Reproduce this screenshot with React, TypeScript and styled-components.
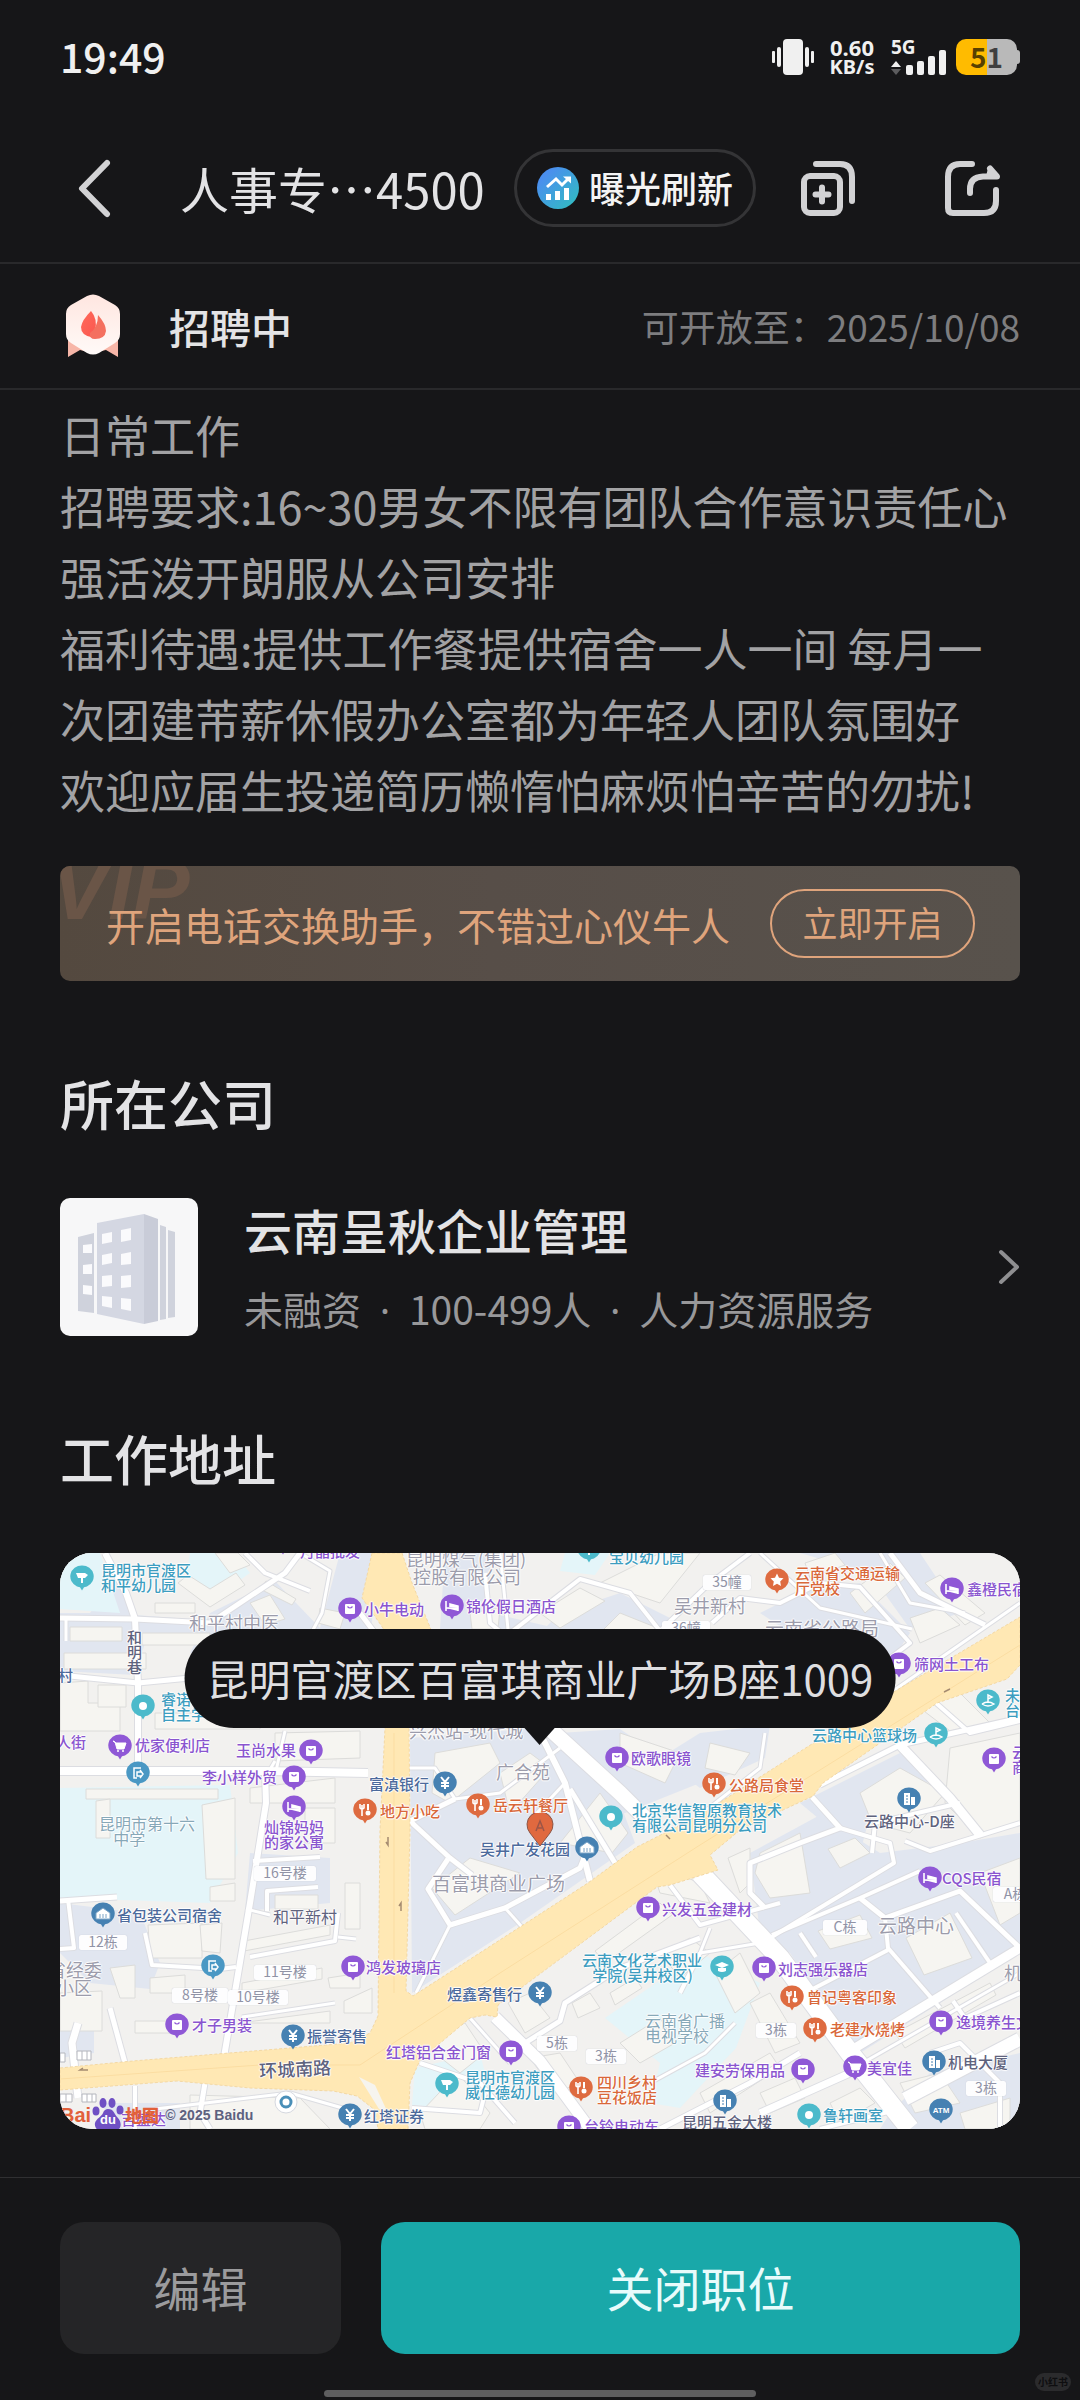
import React from "react";
import styled, { createGlobalStyle } from "styled-components";

const GlobalStyle = createGlobalStyle`
  * { box-sizing: border-box; }
  html, body { margin: 0; background: #161618; }
  body, button { font-family: "Noto Sans CJK SC", "Noto Sans", sans-serif; }
`;

const Page = styled.div`
  min-height: 100vh;
  display: flex;
  flex-direction: column;
  background: #161618;
  color: #e3e3e5;
`;

/* ---------- status bar ---------- */

const StatusBar = styled.div`
  height: 114px;
  padding: 0 60px;
  display: flex;
  align-items: center;
  color: #f0f0f0;
`;
const Clock = styled.time`
  flex: 1;
  padding-bottom: 4px;
  font-size: 41px;
  line-height: 48px;
  font-weight: 500;
`;
const StatusIcons = styled.div`
  display: flex;
  align-items: center;
`;
const Speed = styled.div`
  width: 76px;
  text-align: center;
  font-family: "Noto Sans", sans-serif;
  font-weight: 700;
  font-size: 20px;
  line-height: 20px;
`;
const SpeedValue = styled.div`
  font-size: 22px;
`;
const SignalIcon = styled.svg`
  margin-right: 8px;
`;
const Battery = styled.div`
  display: flex;
  align-items: center;
`;
const BatteryBody = styled.div`
  width: 61px;
  height: 36px;
  border-radius: 10px;
  background: linear-gradient(90deg, #ffbb00 51%, #b9b9b9 51%);
  color: rgba(0, 0, 0, 0.66);
  font-size: 28px;
  line-height: 34px;
  font-weight: 700;
  text-align: center;
`;
const BatteryTip = styled.div`
  width: 3px;
  height: 14px;
  border-radius: 0 3px 3px 0;
  background: #b9b9b9;
`;

/* ---------- header ---------- */

const Header = styled.header`
  height: 150px;
  padding: 0 78px 0 60px;
  display: flex;
  align-items: center;
  border-bottom: 2px solid #29292b;
`;
const IconButton = styled.button<{ $gap?: number }>`
  width: 60px;
  height: 60px;
  margin: 0 0 0 ${(p) => p.$gap ?? 0}px;
  padding: 0;
  border: 0;
  background: none;
  color: #d2d2d4;
  flex: none;
  svg { display: block; }
`;
const Title = styled.h1`
  flex: 1;
  min-width: 0;
  margin: 0 0 0 60px;
  font-size: 49px;
  line-height: 64px;
  font-weight: 400;
  white-space: nowrap;
`;
const BoostButton = styled.button`
  height: 78px;
  padding: 0 20px;
  display: flex;
  align-items: center;
  gap: 10px;
  flex: none;
  border: 3px solid #343436;
  border-radius: 39px;
  background: none;
  color: #f4f4f4;
  font-size: 36px;
  line-height: 48px;
  font-weight: 500;
`;
const BoostLabel = styled.span`
  padding-bottom: 3px;
`;

/* ---------- recruiting state ---------- */

const StateRow = styled.section`
  height: 126px;
  padding: 0 60px;
  display: flex;
  align-items: center;
  border-bottom: 2px solid #29292b;
`;
const StateName = styled.strong`
  flex: 1;
  margin-left: 45px;
  font-size: 41px;
  line-height: 56px;
  font-weight: 500;
`;
const OpenUntil = styled.span`
  color: #7d7d7f;
  font-size: 37px;
  line-height: 48px;
`;

/* ---------- body ---------- */

const Main = styled.main`
  flex: 1;
  padding: 9px 60px 48px;
`;
const Description = styled.p`
  margin: 0;
  color: #a2a2a4;
  font-size: 45px;
  line-height: 71px;
  white-space: pre-line;
`;
const Banner = styled.aside`
  position: relative;
  overflow: hidden;
  height: 115px;
  margin-top: 41px;
  padding: 0 45px 0 46px;
  display: flex;
  align-items: center;
  justify-content: space-between;
  border-radius: 10px;
  background: linear-gradient(90deg, #54493f 0%, #574e48 45%, #58524c 100%);
  color: #dfa47c;
`;
const VipMark = styled.span`
  position: absolute;
  left: -9px;
  top: -17px;
  color: #6a5547;
  font-family: "Liberation Sans", sans-serif;
  font-size: 86px;
  line-height: 80px;
  font-weight: 700;
  font-style: italic;
`;
const BannerText = styled.span`
  position: relative;
  font-size: 39px;
  line-height: 56px;
  white-space: nowrap;
`;
const BannerButton = styled.button`
  width: 205px;
  height: 69px;
  padding: 0 0 3px;
  border: 2px solid #dfa47c;
  border-radius: 35px;
  background: none;
  color: #dfa47c;
  font-size: 35px;
  line-height: 48px;
`;
const SectionTitle = styled.h2`
  margin: 90px 0 63px;
  font-size: 54px;
  line-height: 64px;
  font-weight: 500;
`;
const Company = styled.a`
  display: flex;
  align-items: center;
  color: inherit;
  text-decoration: none;
  svg { flex: none; display: block; }
`;
const CompanyText = styled.div`
  flex: 1;
  margin-left: 46px;
`;
const CompanyName = styled.div`
  font-size: 48px;
  line-height: 62px;
  font-weight: 500;
`;
const CompanyMeta = styled.div`
  margin-top: 20px;
  color: #98989a;
  font-size: 39px;
  line-height: 56px;
`;
const Dot = styled.span`
  margin: 0 10px;
  font-family: "Noto Sans", sans-serif;
  line-height: 1;
`;

/* ---------- map ---------- */

const MapBox = styled.div`
  position: relative;
  height: 576px;
  overflow: hidden;
  border-radius: 32px;
  background: #f2f1ef;
`;
const MapArt = styled.svg`
  display: block;
  width: 100%;
  height: 100%;
`;
const tones = {
  purple: "#8a55cf",
  teal: "#3d9dc0",
  orange: "#d9683a",
  blue: "#4c6a9c",
  ink: "#5f637e",
  grey: "#9c9cab",
  mist: "#87a8b8",
} as const;
type Tone = keyof typeof tones;

const MapLabel = styled.span<{ $x: number; $y: number; $tone: Tone; $size: number }>`
  position: absolute;
  left: ${(p) => p.$x}px;
  top: ${(p) => p.$y - 10}px;
  color: ${(p) => tones[p.$tone]};
  font-size: ${(p) => p.$size}px;
  line-height: 15px;
  font-weight: ${(p) => (p.$size > 15 ? 400 : 500)};
  white-space: pre;
  text-shadow: 0 0 1px #fff, 1px 0 1px #fff, -1px 0 1px #fff, 0 1px 1px #fff, 0 -1px 1px #fff;
`;
const RoadName = styled(MapLabel)`
  transform: rotate(-3deg);
  font-weight: 500;
`;
const MapTag = styled.span<{ $x: number; $y: number; $w: number }>`
  position: absolute;
  left: ${(p) => p.$x - p.$w / 2}px;
  top: ${(p) => p.$y - 8}px;
  width: ${(p) => p.$w}px;
  height: 15px;
  border-radius: 2px;
  background: #fdfdfe;
  box-shadow: 0 0 1px #b9bccb;
  color: #9093a6;
  font-size: 14px;
  line-height: 13px;
  text-align: center;
  white-space: nowrap;
`;
const PinSvg = styled.svg<{ $x: number; $y: number }>`
  position: absolute;
  left: ${(p) => p.$x - 13}px;
  top: ${(p) => p.$y - 12}px;
`;
const Bubble = styled.div`
  position: absolute;
  left: 50%;
  top: 76px;
  height: 99px;
  padding: 0 22px;
  transform: translateX(-50%);
  border-radius: 50px;
  background: #141416;
  color: #dedee0;
  font-size: 42px;
  line-height: 97px;
  white-space: nowrap;
  &::after {
    content: "";
    position: absolute;
    left: 50%;
    top: 98px;
    margin-left: -16px;
    border: 16px solid transparent;
    border-top: 18px solid #141416;
    border-bottom: 0;
  }
`;
const BaiduMark = styled.div`
  position: absolute;
  left: 0;
  bottom: 0;
  height: 28px;
  display: flex;
  align-items: center;
  color: #e2603a;
  font-size: 17px;
  line-height: 20px;
  font-weight: 900;
`;
const BaiduName = styled.span`
  font-family: "Liberation Sans", sans-serif;
  font-size: 20px;
`;
const Copyright = styled.span`
  margin-left: 6px;
  color: #5d6180;
  font-family: "Liberation Sans", sans-serif;
  font-size: 14px;
  font-weight: 700;
`;

/* ---------- footer ---------- */

const Footer = styled.footer`
  position: relative;
  padding: 44px 60px 3px;
  border-top: 1px solid #303032;
`;
const Actions = styled.div`
  display: flex;
  gap: 40px;
`;
const ActionButton = styled.button<{ $primary?: boolean }>`
  flex: ${(p) => (p.$primary ? "1 1 0" : "0 0 281px")};
  height: 132px;
  padding: 0 0 2px;
  border: 0;
  border-radius: 24px;
  background: ${(p) => (p.$primary ? "#19a8a9" : "#252527")};
  color: ${(p) => (p.$primary ? "#e8fbfb" : "#9b9b9d")};
  font-size: 47px;
  line-height: 64px;
`;
const HomeIndicator = styled.div`
  width: 45%;
  height: 7px;
  margin: 36px auto 0;
  border-radius: 4px;
  background: #5e5e5f;
`;
const Watermark = styled.span`
  position: absolute;
  right: 9px;
  bottom: 9px;
  width: 36px;
  height: 18px;
  border-radius: 9px;
  background: #2b2b2d;
  color: #0e0e10;
  font-size: 10px;
  line-height: 18px;
  font-weight: 700;
  text-align: center;
`;

/* ---------- map data ---------- */

type Glyph = "bag" | "bed" | "cart" | "food" | "yen" | "build" | "dot" | "tree" | "ball" | "exit" | "hall" | "cap" | "star" | "atm";
type PinTone = "purple" | "teal" | "orange" | "blue" | "sky";

const pinFill: Record<PinTone, string> = {
  purple: "#8f58d6",
  teal: "#4cbacb",
  orange: "#de6b40",
  blue: "#4681b2",
  sky: "#4a98c4",
};

const pins: [number, number, PinTone, Glyph][] = [
  [22, 24, "teal", "tree"], [83, 153, "teal", "dot"], [60, 193, "purple", "cart"], [78, 220, "sky", "exit"],
  [251, 198, "purple", "bag"], [234, 224, "purple", "bag"], [234, 254, "purple", "bed"], [290, 56, "purple", "bag"],
  [223, -12, "purple", "bag"], [529, -4, "teal", "tree"], [392, 53, "purple", "bed"], [557, 205, "purple", "bag"],
  [385, 230, "blue", "yen"], [305, 257, "orange", "food"], [418, 252, "orange", "food"], [551, 264, "teal", "dot"],
  [717, 27, "orange", "star"], [892, 36, "purple", "bed"], [839, 111, "purple", "bag"], [928, 148, "teal", "ball"],
  [876, 181, "teal", "ball"], [934, 206, "purple", "bag"], [654, 231, "orange", "food"], [849, 246, "blue", "build"],
  [43, 361, "blue", "hall"], [153, 413, "sky", "exit"], [293, 414, "purple", "bag"], [117, 472, "purple", "bag"],
  [233, 483, "blue", "yen"], [290, 562, "blue", "yen"], [527, 295, "blue", "hall"], [588, 355, "purple", "bag"],
  [662, 414, "teal", "cap"], [480, 440, "blue", "yen"], [451, 499, "purple", "bag"], [387, 531, "teal", "tree"],
  [521, 535, "orange", "food"], [509, 574, "purple", "bag"], [665, 548, "blue", "build"], [870, 325, "purple", "bed"],
  [704, 415, "purple", "bag"], [732, 444, "orange", "food"], [755, 476, "orange", "food"], [881, 469, "purple", "bag"],
  [743, 517, "purple", "bag"], [795, 514, "purple", "cart"], [874, 509, "blue", "build"], [881, 557, "blue", "atm"],
  [749, 562, "teal", "dot"],
];

const labels: [string, number, number, Tone, number?][] = [
  ["昆明市官渡区\n和平幼儿园", 41, 19, "teal"],
  ["和平村中医", 129, 72, "grey", 18],
  ["和\n明\n巷", 67, 86, "ink"],
  ["村", -2, 124, "blue"],
  ["睿诺\n自主学", 101, 148, "teal"],
  ["人街", -4, 191, "purple"],
  ["优家便利店", 75, 194, "purple"],
  ["玉尚水果", 176, 199, "purple"],
  ["李小样外贸", 142, 226, "purple"],
  ["灿锦妈妈\n的家公寓", 204, 276, "purple"],
  ["昆明市第十六\n    中学", 39, 273, "mist", 16],
  ["丹晶批发", 240, 0, "purple"],
  ["小牛电动", 304, 58, "purple"],
  ["昆明煤气(集团)", 346, 8, "grey", 18],
  ["控股有限公司", 353, 26, "grey", 18],
  ["宝贝幼儿园", 549, 6, "teal"],
  ["锦伦假日酒店", 406, 55, "purple"],
  ["吴井新村", 614, 55, "grey", 18],
  ["兴杰站-现代城", 349, 180, "grey", 18],
  ["广合苑", 436, 221, "grey", 18],
  ["欧歌眼镜", 571, 207, "purple"],
  ["富滇银行", 309, 233, "blue"],
  ["地方小吃", 320, 260, "orange"],
  ["岳云轩餐厅", 433, 254, "orange"],
  ["北京华信智原教育技术\n有限公司昆明分公司", 572, 259, "teal"],
  ["云南省交通运输\n厅党校", 735, 22, "orange"],
  ["鑫橙民宿", 907, 38, "purple"],
  ["云南省公路局", 705, 77, "grey", 19],
  ["筛网土工布", 854, 113, "purple"],
  ["未\n台", 945, 144, "teal"],
  ["云路中心篮球场", 752, 184, "teal"],
  ["云\n商", 952, 201, "purple"],
  ["公路局食堂", 669, 234, "orange"],
  ["云路中心-D座", 804, 270, "ink"],
  ["和平新村", 213, 366, "ink", 16],
  ["省包装公司宿舍", 57, 364, "blue"],
  ["省经委", -12, 419, "grey", 18],
  ["小区", -4, 437, "grey", 18],
  ["鸿发玻璃店", 306, 416, "purple"],
  ["才子男装", 132, 474, "purple"],
  ["振誉寄售", 247, 485, "blue"],
  ["吉盛达", 61, 568, "purple"],
  ["红塔证券", 304, 565, "blue"],
  ["吴井广发花园", 420, 298, "blue"],
  ["百富琪商业广场", 372, 332, "grey", 19],
  ["兴发五金建材", 602, 358, "purple"],
  ["云南文化艺术职业\n   学院(吴井校区)", 522, 409, "teal"],
  ["煜鑫寄售行", 387, 443, "blue"],
  ["云南省广播\n电视学校", 585, 470, "mist", 16],
  ["红塔铝合金门窗", 326, 501, "purple"],
  ["昆明市官渡区\n威仕德幼儿园", 405, 526, "teal"],
  ["四川乡村\n豆花饭店", 537, 531, "orange"],
  ["台铃电动车", 524, 575, "purple"],
  ["昆明五金大楼", 622, 571, "ink"],
  ["CQS民宿", 882, 327, "purple"],
  ["云路中心", 818, 374, "grey", 19],
  ["机", 944, 422, "grey", 18],
  ["刘志强乐器店", 718, 418, "purple"],
  ["曾记粤客印象", 747, 446, "orange"],
  ["老建水烧烤", 770, 478, "orange"],
  ["逸境养生文化", 896, 471, "purple"],
  ["建安劳保用品", 635, 519, "purple"],
  ["美宜佳", 807, 517, "purple"],
  ["机电大厦", 888, 511, "ink"],
  ["鲁轩画室", 763, 564, "teal"],
];

const tags: [string, number, number, number][] = [
  ["35幢", 667, 30, 48], ["36幢", 626, 76, 48], ["16号楼", 225, 321, 62], ["12栋", 43, 390, 48],
  ["11号楼", 225, 420, 62], ["8号楼", 140, 443, 56], ["10号楼", 198, 445, 60], ["5栋", 497, 491, 40],
  ["3栋", 546, 504, 40], ["C栋", 785, 375, 44], ["A栋", 955, 342, 44], ["3栋", 716, 478, 40], ["3栋", 926, 536, 40],
];

const greyZones = [
  "M0 60H30L60 20L75 62L130 66L160 90H85L75 122L0 118Z",
  "M150 60L215 28L260 75L280 0H315L312 70L300 100H130Z",
  "M385 0H430V60L500 76H380Z",
  "M500 60L560 40L640 80H480Z",
  "M700 60L740 40L800 30L850 80L830 110L760 100Z",
  "M740 0H860L900 60L850 76L810 20Z",
  "M350 185L420 180L470 175L560 250L575 290L460 370L352 440Z",
  "M500 180L560 176L640 230L560 262L480 192Z",
  "M640 180L710 172L705 205L640 235L600 205Z",
  "M770 235L840 200L870 228L810 262L800 300L740 250Z",
  "M690 300L760 262L820 300L900 290L960 280V380L880 450L780 475L730 400L700 380Z",
  "M780 470L860 420L960 360V400L800 500Z",
  "M0 350L80 360L100 410L90 436L30 430L0 400Z",
  "M190 300L270 305V350L185 358Z",
  "M0 455H34V500L0 505Z",
  "M830 560L870 520L960 500V576H820Z",
  "M40 550H120V576H60Z",
  "M660 80L700 110L640 150L560 90Z",
];
const cyanZones = [
  "M0 0H40L60 60L0 56Z",
  "M130 0H175L190 20L150 48L125 30Z",
  "M0 235L170 232L178 300L150 350L0 345Z",
  "M505 0H550L535 22L500 18Z",
  "M545 465L640 400L700 430L676 495L620 555L590 550L600 510Z",
  "M355 515L420 500L430 540L400 556L352 552Z",
];
const buildings = [
  "M10 74H62V88H10Z", "M82 80H150V92H82Z", "M4 100H86V116H4Z", "M0 130L28 128V150H60V178H0Z",
  "M38 132H66V154H38Z", "M95 50H135V60H95Z", "M118 30L150 54L185 32L176 20L150 36L128 22Z",
  "M155 0H178L190 12L170 20Z", "M190 50L210 42L225 66L205 72Z", "M206 28L236 46L232 52L200 36Z",
  "M260 55L285 60L280 76L258 70Z", "M95 160H200V176H95Z", "M215 180L300 178L300 205L215 208Z",
  "M26 236H158V246H26Z", "M36 248L50 246V285H36Z", "M142 252L175 245V326H146Z", "M150 334L175 330V348H150Z",
  "M190 235L275 225V250H190Z", "M245 255H275V290H245Z", "M215 342H258V356H215Z", "M285 330H300V376H285Z",
  "M88 372L142 370V405H90Z", "M140 372L162 370L160 400L142 398Z", "M184 388L270 372V382L184 398Z",
  "M0 440L42 438V478H0Z", "M50 415L75 412V445H60Z", "M75 468H120V480H75Z", "M90 425L125 422V440H90Z",
  "M182 430L262 415V426L182 440Z", "M268 425L300 420V435H270Z", "M284 448L312 435V460H284Z",
  "M180 470L270 458V470H180Z", "M130 542L240 545L270 576H130Z", "M375 200L430 190L440 210L390 250L372 240Z",
  "M440 220L470 200L490 215L450 260Z", "M500 290L540 240L568 280L552 300Z", "M372 335L410 305L460 320L395 362Z",
  "M480 60L520 35L545 48L500 75Z", "M410 60L440 55L438 76H412Z", "M520 100L560 60L600 76Z",
  "M540 30L600 0L640 0L600 50Z", "M560 180L620 200L605 230L560 210Z", "M650 190L690 200L675 222L645 215Z",
  "M745 10L775 0L785 12L750 25Z", "M790 40L830 10L845 25L805 60Z", "M865 30L880 22L925 60L905 72Z",
  "M850 65L880 55L900 72L860 90Z", "M860 155L900 140L930 170L890 178Z", "M890 195L960 180V270L920 285L885 250Z",
  "M800 240L840 215L885 240L850 280L812 270Z", "M768 296L795 285L810 300L780 315Z",
  "M700 300L740 280L750 340L710 345L695 320Z", "M758 378L800 362L812 385L770 396Z",
  "M846 385L890 360L912 405L864 422Z", "M920 320L960 305V360L940 372Z", "M535 398L600 350L612 362L545 410Z",
  "M600 400L630 385L650 400L620 425Z", "M448 450L470 440L490 465L465 480Z", "M512 450L530 440L540 455L518 465Z",
  "M550 440L575 425L582 435L555 452Z", "M560 490L600 465L615 490L580 510Z", "M470 505L500 500L520 530L495 540Z",
  "M362 490L405 470L425 500L400 520Z", "M640 540L710 500L720 515L650 560Z", "M655 420L680 400L700 440L675 460Z",
  "M690 450L710 440L740 490L715 500Z", "M700 540L735 525L745 545L710 560Z", "M770 550L800 535L815 550L780 570Z",
  "M840 530L880 520L900 550L855 560Z", "M900 560L950 545V576H905Z", "M835 480L930 430L936 442L845 495Z",
  "M590 310L640 330L650 350L600 340Z", "M668 305L690 295L690 330L680 340Z", "M398 520L430 560L420 576H365L360 560Z",
];
const roads: [string, number][] = [
  ["M45 0L66 40L75 66L78 130V215", 7], ["M0 65L75 66L150 70L225 20L240 0", 6], ["M0 122L78 130L140 124", 6],
  ["M0 218H205L308 220", 9], ["M205 218L206 250L190 350L163 510", 7], ["M240 0L270 18L262 60L230 120", 4],
  ["M185 0L205 20L250 38", 5], ["M300 60L318 84", 6], ["M225 178L216 218", 4], ["M6 66V88", 4],
  ["M0 348L57 344", 6], ["M8 346L14 395L0 396", 5], ["M85 380L92 412L160 416L176 414", 5],
  ["M50 455L65 510", 6], ["M18 470L12 490L18 545", 8], ["M193 308L260 304", 5], ["M207 358V338L258 334", 5],
  ["M186 356L210 362", 4], ["M190 404L275 388L278 360", 5], ["M278 384L296 386", 4], ["M182 464L275 450", 4],
  ["M145 530L140 560L150 576", 6], ["M75 533V576", 5], ["M95 556L230 540L300 560", 4], ["M215 208L205 225", 4],
  ["M350 215H375L395 246L440 240L500 195", 4], ["M395 246L350 268L390 305L412 322", 6],
  ["M388 306L368 336L390 372L445 355L520 315L530 290", 6], ["M390 372L356 440", 4], ["M445 355L462 374", 4],
  ["M480 180L505 230L530 328", 7], ["M505 230L475 262", 4], ["M490 176L560 240L590 270", 16],
  ["M510 236L555 310", 6], ["M425 20L430 70L442 80", 5], ["M450 80L520 26L570 40L600 78L650 30L690 0", 5],
  ["M440 0L448 76", 4], ["M652 70L680 45L720 50L760 30L800 34L850 90L830 105L780 100", 5],
  ["M700 0L760 55L852 76", 4], ["M830 0L860 40L925 72", 6], ["M820 0L850 50L905 60", 4],
  ["M730 220L830 140L960 50", 4], ["M760 232L840 192L960 165", 6], ["M838 190L890 245L920 282", 10],
  ["M876 150L910 180L960 168", 5], ["M900 250L815 270L812 300", 5], ["M640 262L700 215L705 180", 4],
  ["M752 244L780 275L740 290L690 310L690 340L705 355", 6], ["M780 275L830 290L834 310L710 385", 5],
  ["M712 382L800 345L860 318", 5], ["M800 345L825 365L900 338L960 395", 6], ["M825 365L828 395L880 455", 5],
  ["M828 397L745 440", 5], ["M740 380L756 404", 5], ["M896 360L930 410", 5], ["M845 288L870 298L960 270", 5],
  ["M640 320L720 405L790 500L850 576", 20], ["M790 498L960 395", 10], ["M806 508L960 420", 4],
  ["M700 560L790 520", 8], ["M845 546L960 486", 14], ["M893 448L905 465L960 440", 5],
  ["M610 332L640 372L720 350", 5], ["M650 375L640 400L700 390", 4], ["M435 464L480 508L530 576", 12],
  ["M465 490L500 468L505 450L560 415L640 385", 6], ["M620 440L640 400", 5], ["M360 510L420 530L455 570", 5],
  ["M352 555L420 560L425 540", 5], ["M590 530L645 500L675 470", 4], ["M600 576L690 530L740 500", 6],
  ["M410 465L450 510", 4], ["M870 500L900 490L940 530V576", 5], ["M760 576L840 556", 5],
];
const avenue =
  "M312 0H342L352 30L374 84L349 175L350 277L346 438L353 443L460 374L528 330L577 294L640 262L763 184L837 137L960 64V112L947 126L877 150L763 230L753 243L680 277L650 302L658 317L610 332L597 334L438 452L437 464L425 462L410 465L360 507L350 530L348 576H318L315 557L297 543L273 538L190 535L117 528L0 537V515L73 508L290 490L310 480L318 463L320 277L325 175L323 75L302 45Z";

const glyphs: Record<Glyph, React.ReactNode> = {
  bag: (<><rect x="8" y="7" width="10" height="10" rx="1" fill="#fff" /><path d="M10.500 9.500q2.500 3 5 0" fill="none" stroke="#8f58d6" strokeWidth="1.200" /></>),
  bed: (<path d="M7 7v10M7 14h12v3M19 14v-2l-8-2v3" fill="#fff" stroke="#fff" strokeWidth="1.600" />),
  cart: (<><path d="M6 7l2 1 2 7h7l2-6H9z" fill="#fff" stroke="#fff" /><circle cx="11" cy="17" r="1" fill="#fff" /><circle cx="16" cy="17" r="1" fill="#fff" /></>),
  food: (<><path d="M8 6v4q2 2 4 0V6M10 7v11" fill="none" stroke="#fff" strokeWidth="1.600" /><path d="M16 6v6" stroke="#fff" strokeWidth="2" /><circle cx="16" cy="15" r="2.500" fill="#fff" /></>),
  yen: (<path d="M9 6l4 5 4-5M13 11v7M9 12h8M9 15h8" fill="none" stroke="#fff" strokeWidth="2" />),
  build: (<><path d="M8 6h6v12H8zM15 10h4v8h-4z" fill="#fff" /><path d="M10 9h2M10 12h2M10 15h2" stroke="#4681b2" /></>),
  dot: (<circle cx="13" cy="12" r="4" fill="#fff" />),
  tree: (<path d="M7 8h9l3 2-3 3h-2v5h-2v-5H9z" fill="#fff" />),
  ball: (<path d="M7 15q6-4 12 0q-6 4-12 0M13 14V6l4 2-4 2" fill="none" stroke="#fff" strokeWidth="1.500" />),
  exit: (<path d="M16 7H9v10h3M16 11h-4v4h4M15 9l3 4-3 4" fill="none" stroke="#fff" strokeWidth="1.500" />),
  hall: (<path d="M6 11l7-5 7 5v6H6zM10 12v4M13 12v4M16 12v4" fill="#fff" stroke="#7ba4c6" />),
  cap: (<path d="M6 10l7-3 7 3-7 3zM9 13v3q4 2 8 0v-3" fill="#fff" />),
  star: (<path d="M13 5.500l2 4.200 4.500.6-3.300 3.200.8 4.500-4-2.200-4 2.200.8-4.500-3.300-3.200 4.500-.6z" fill="#fff" />),
  atm: (<text x="13" y="15" textAnchor="middle" fontFamily="Liberation Sans, sans-serif" fontSize="8" fontWeight="700" fill="#fff">ATM</text>),
};

function Pin({ x, y, tone, glyph }: { x: number; y: number; tone: PinTone; glyph: Glyph }) {
  return (
    <PinSvg $x={x} $y={y} width="26" height="28" viewBox="0 0 26 28" aria-hidden="true">
      <path d="M13 .5a11.500 11 0 0 0-5 21l3 .8 2 3.200 2-3.200 3-.8a11.500 11 0 0 0-5-21z" fill={pinFill[tone]} />
      {glyphs[glyph]}
    </PinSvg>
  );
}

function LocationMap() {
  return (
    <MapBox>
      <MapArt viewBox="0 0 960 576" preserveAspectRatio="xMidYMid slice" aria-hidden="true">
        <rect width="960" height="576" fill="#f2f1ef" />
        {greyZones.map((d) => <path key={d} d={d} fill="#e1e6f0" />)}
        {cyanZones.map((d) => <path key={d} d={d} fill="#e4f5f9" />)}
        {buildings.map((d) => <path key={d} d={d} fill="#f6f5f1" stroke="#dcdcda" strokeWidth="1" />)}
        <g fill="none" stroke="#dcdde2" strokeLinejoin="round">
          {roads.map(([d, w]) => <path key={d} d={d} strokeWidth={w + 1} />)}
        </g>
        <g fill="none" stroke="#fff" strokeLinejoin="round">
          {roads.map(([d, w]) => <path key={d} d={d} strokeWidth={w - 1} />)}
        </g>
        <path d={avenue} fill="#ffe8b4" stroke="#f3d8a4" strokeWidth="1" strokeDasharray="3 2" strokeLinejoin="round" />
        <path d="M299 524l16 8 12 26-8-2z" fill="#f6f4ee" />
        <path d="M334 180V440M0 526L200 512L300 512L440 420L640 292L960 92" fill="none" stroke="#fbdda2" strokeWidth="1" />
        <g stroke="#b4b6bd" fill="#fff">
          <path d="M0 500h5v9H0zM17 498h14v9H17zM0 541h12v8H0zM22 541h14v8H22z" />
          <path d="M22 498v9M27 498v9M6 541v8M27 541v8M32 541v8" />
        </g>
        <path d="M328 284v8l-2-3M341 358v-8l-2 3M28 517h-8l3-2M610 286l-4-4M884 139l6-3" fill="none" stroke="#a58b70" strokeWidth="1.500" />
        <circle cx="226" cy="549" r="11" fill="#fff" stroke="#d5d8df" />
        <circle cx="226" cy="549" r="5" fill="none" stroke="#4a8fb8" strokeWidth="3" />
      </MapArt>
      {tags.map(([t, x, y, w]) => <MapTag key={`${t}${x}`} $x={x} $y={y} $w={w}>{t}</MapTag>)}
      {labels.map(([t, x, y, tone, size]) => (
        <MapLabel key={`${t}${x}`} $x={x} $y={y} $tone={tone} $size={size ?? 15}>{t}</MapLabel>
      ))}
      <RoadName $x={199} $y={518} $tone="ink" $size={18}>环城南路</RoadName>
      {pins.map(([x, y, tone, glyph]) => <Pin key={`${x}-${y}`} x={x} y={y} tone={tone} glyph={glyph} />)}
      <PinSvg $x={479} $y={272} width="28" height="34" viewBox="0 0 28 34" aria-hidden="true">
        <path d="M14 33L4 20a13 13 0 1 1 20 0z" fill="#e0693f" stroke="#8c5546" />
        <path d="M10 18l4-10 4 10M12 15h4" fill="none" stroke="#9b5547" strokeWidth="1.500" />
      </PinSvg>
      <BaiduMark>
        <BaiduName>Bai</BaiduName>
        <svg width="34" height="36" viewBox="0 0 34 36" aria-hidden="true">
          <g fill="#6f50c4">
            <ellipse cx="5" cy="14" rx="3.500" ry="4.500" /><ellipse cx="12" cy="6" rx="3.500" ry="5" />
            <ellipse cx="21" cy="6" rx="3.500" ry="5" /><ellipse cx="29" cy="13" rx="3.500" ry="4.500" />
            <path d="M17 12c6 0 6 5 10 9s4 13-4 13c-4 0-8-1-12 0s-8-4-7-8 7-7 8-10 3-4 5-4z" />
          </g>
          <text x="17" y="27" textAnchor="middle" fontFamily="Liberation Sans, sans-serif" fontSize="13" fontWeight="700" fill="#fff">du</text>
        </svg>
        地图
        <Copyright>© 2025 Baidu</Copyright>
      </BaiduMark>
      <Bubble>昆明官渡区百富琪商业广场B座1009</Bubble>
    </MapBox>
  );
}

const description = `日常工作
招聘要求:16~30男女不限有团队合作意识责任心
强活泼开朗服从公司安排
福利待遇:提供工作餐提供宿舍一人一间 每月一
次团建芾薪休假办公室都为年轻人团队氛围好
欢迎应届生投递简历懒惰怕麻烦怕辛苦的勿扰!`;

export default function App() {
  return (
    <Page>
      <GlobalStyle />
      <StatusBar>
        <Clock>19:49</Clock>
        <StatusIcons>
          <svg width="42" height="36" viewBox="0 0 42 36" fill="#f0f0f0" aria-hidden="true">
            <rect x="11" width="20" height="36" rx="4" />
            <rect x="0" y="12" width="3" height="12" rx="1" /><rect x="5" y="8" width="4" height="20" rx="2" />
            <rect x="33" y="8" width="4" height="20" rx="2" /><rect x="39" y="12" width="3" height="12" rx="1" />
          </svg>
          <Speed><SpeedValue>0.60</SpeedValue>KB/s</Speed>
          <SignalIcon width="58" height="38" viewBox="0 0 58 38" fill="#f0f0f0" role="img" aria-label="5G">
            <text x="1" y="16" fontFamily="Noto Sans, sans-serif" fontSize="19" fontWeight="700">5G</text>
            <path d="M1 29l5-6 5 6z" /><path d="M1 31h10l-5 6z" fill="#5c5c5e" />
            <rect x="16" y="27" width="7" height="10" rx="2" /><rect x="27" y="23" width="7" height="14" rx="2" />
            <rect x="38" y="18" width="7" height="19" rx="2" /><rect x="49" y="12" width="7" height="25" rx="2" />
          </SignalIcon>
          <Battery><BatteryBody>51</BatteryBody><BatteryTip /></Battery>
        </StatusIcons>
      </StatusBar>

      <Header>
        <IconButton aria-label="返回">
          <svg width="60" height="60" viewBox="0 0 60 60" fill="none" stroke="currentColor" strokeWidth="6" strokeLinecap="round" strokeLinejoin="round">
            <path d="M47 5L22 30.500L47 56" />
          </svg>
        </IconButton>
        <Title>人事专…4500</Title>
        <BoostButton>
          <svg width="42" height="42" viewBox="0 0 42 42" aria-hidden="true">
            <defs>
              <linearGradient id="boost" x1="0" y1="0" x2="1" y2="1">
                <stop offset="0.200" stopColor="#4a8fee" /><stop offset="1" stopColor="#2fc0bd" />
              </linearGradient>
            </defs>
            <circle cx="21" cy="21" r="21" fill="url(#boost)" />
            <path d="M10 20l9-8 6 6 7-7" fill="none" stroke="#fff" strokeWidth="3" />
            <path d="M26 9.500h8v7z" fill="#fff" />
            <path d="M9 27h5v6H9zM18 24h5v9h-5zM27 21h5v12h-5z" fill="#fff" />
          </svg>
          <BoostLabel>曝光刷新</BoostLabel>
        </BoostButton>
        <IconButton $gap={42} aria-label="复制职位">
          <svg width="60" height="60" viewBox="0 0 60 60" fill="none" stroke="currentColor" strokeWidth="6" strokeLinecap="round">
            <rect x="6" y="18" width="36" height="37" rx="6" />
            <path d="M18 6H42Q54 6 54 19V43M24 29.500V43.500M17.500 36.500H30.500" />
          </svg>
        </IconButton>
        <IconButton $gap={84} aria-label="分享">
          <svg width="60" height="60" viewBox="0 0 60 60" fill="none" stroke="currentColor" strokeWidth="6" strokeLinecap="round" strokeLinejoin="round">
            <path d="M30 6H18Q6 6 6 19V50Q6 55 11 55H42Q54 55 54 43V32" />
            <path d="M28 35V31Q28 19 41 18.500H55L48 10.500" />
            <path d="M48 10.500L55 18.500H46Z" fill="currentColor" strokeWidth="4" />
          </svg>
        </IconButton>
      </Header>

      <StateRow>
        <svg width="64" height="66" viewBox="0 0 64 66" aria-hidden="true">
          <defs>
            <linearGradient id="medal" x1="0" y1="0" x2="0" y2="1">
              <stop offset="0" stopColor="#ffe6e0" /><stop offset="1" stopColor="#fffaf8" />
            </linearGradient>
            <linearGradient id="flame" x1="0" y1="0" x2="1" y2="1">
              <stop offset="0" stopColor="#ff6a5a" /><stop offset="1" stopColor="#fb5750" />
            </linearGradient>
          </defs>
          <path d="M8 44L8 64L20 57L32 60L46 57L58 64V44Z" fill="#f7b6a8" />
          <path d="M27 3Q33 0 39 3L55 12Q60 15 60 21V41Q60 47 55 50L39 60Q33 63 27 60L11 50Q6 47 6 41V21Q6 15 11 12Z" fill="url(#medal)" />
          <path d="M31 18Q38 26 35 38L31 44Q21 42 21 34Q22 27 31 18Z" fill="url(#flame)" />
          <path d="M38 22Q46 31 46 38Q45 46 35 46Q29 46 30 40Q38 34 38 22Z" fill="#f4705f" />
        </svg>
        <StateName>招聘中</StateName>
        <OpenUntil>可开放至：2025/10/08</OpenUntil>
      </StateRow>

      <Main>
        <Description>{description}</Description>
        <Banner>
          <VipMark aria-hidden="true">VIP</VipMark>
          <BannerText>开启电话交换助手，不错过心仪牛人</BannerText>
          <BannerButton>立即开启</BannerButton>
        </Banner>

        <SectionTitle>所在公司</SectionTitle>
        <Company href="#company">
          <svg width="138" height="138" viewBox="0 0 138 138" aria-hidden="true">
            <rect width="138" height="138" rx="10" fill="#f7f7f8" />
            <path d="M18 39L34 35V115L18 113Z" fill="#cfd2dc" />
            <path d="M37 25L84 16V126L37 116Z" fill="#d4d7e2" />
            <path d="M84 16L98 21V123L84 126Z" fill="#c9ccd8" />
            <path d="M100 27L106 29V121L100 122Z" fill="#cfd2dc" />
            <path d="M108 32L115 34V119L108 120Z" fill="#cfd2dc" />
            <path d="M42 36l10-2v10l-10 2zM61 32l10-2v12l-10 2zM42 57l10-2v10l-10 2zM61 56l10-2v12l-10 1zM42 78l10-1v11l-10 1zM61 78l10-1v12l-10 1zM42 98l10 1v11l-10-2zM61 100l10 1v12l-10-2zM23 47l9-1v9h-9zM23 67l9-1v10h-9zM23 87l9 1v9l-9-1z" fill="#fafafc" />
          </svg>
          <CompanyText>
            <CompanyName>云南呈秋企业管理</CompanyName>
            <CompanyMeta>未融资 <Dot>·</Dot> 100-499人 <Dot>·</Dot> 人力资源服务</CompanyMeta>
          </CompanyText>
          <svg width="24" height="40" viewBox="0 0 24 40" fill="none" stroke="#8f8f91" strokeWidth="4" strokeLinecap="round" strokeLinejoin="round" aria-hidden="true">
            <path d="M5 5L21 20L5 35" />
          </svg>
        </Company>

        <SectionTitle>工作地址</SectionTitle>
        <LocationMap />
      </Main>

      <Footer>
        <Actions>
          <ActionButton>编辑</ActionButton>
          <ActionButton $primary>关闭职位</ActionButton>
        </Actions>
        <HomeIndicator />
        <Watermark>小红书</Watermark>
      </Footer>
    </Page>
  );
}
